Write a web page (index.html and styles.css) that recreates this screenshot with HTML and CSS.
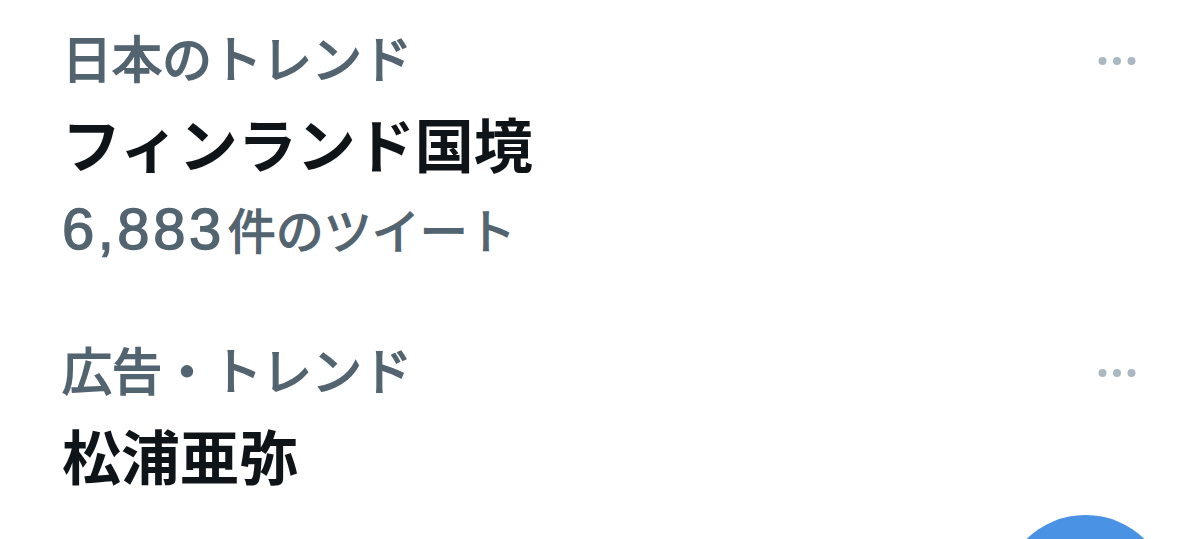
FILE: index.html
```html
<!DOCTYPE html>
<html lang="ja">
<head>
    <meta charset="UTF-8">
    <title>トレンド</title>
    <meta name="viewport" content="width=device-width, initial-scale=1.0">
    <link rel="stylesheet" href="styles.css">
</head>
<body>
    <div class="screen">
        <div class="trends">
            <div class="trend">
                <div class="trend-text">
                    <div class="label">日本のトレンド</div>
                    <div class="title">フィンランド国境</div>
                    <div class="count"><span class="num">6,883</span>件のツイート</div>
                </div>
                <svg class="more" width="38" height="10" viewBox="0 0 38 10">
                    <circle cx="4.5" cy="5" r="4"/>
                    <circle cx="19" cy="5" r="4"/>
                    <circle cx="33.5" cy="5" r="4"/>
                </svg>
            </div>

            <div class="trend">
                <div class="trend-text">
                    <div class="label">広告・トレンド</div>
                    <div class="title">松浦亜弥</div>
                </div>
                <svg class="more" width="38" height="10" viewBox="0 0 38 10">
                    <circle cx="4.5" cy="5" r="4"/>
                    <circle cx="19" cy="5" r="4"/>
                    <circle cx="33.5" cy="5" r="4"/>
                </svg>
            </div>
        </div>

        <div class="fab"></div>
    </div>
</body>
</html>
```

FILE: styles.css
```css
body {
    margin: 0;
    background: #fff;
    font-family: 'Liberation Sans', 'Noto Sans CJK JP', sans-serif;
}
.screen {
    position: relative;
    height: 539px;
    overflow: hidden;
}
.trends {
    display: flex;
    flex-direction: column;
    gap: 62px;
    padding: 19px 64px 0 62px;
}
.trend {
    display: flex;
    justify-content: space-between;
    align-items: flex-start;
}
.trend-text {
    display: flex;
    flex-direction: column;
}
.label {
    color: #536471;
    font-size: 50px;
    line-height: 84px;
    -webkit-text-stroke: 1.8px #536471;
}
.title {
    color: #0f1419;
    font-size: 59px;
    font-weight: 700;
    line-height: 90px;
}
.count {
    color: #536471;
    font-size: 48px;
    line-height: 72px;
    -webkit-text-stroke: 1.4px #536471;
}
.num {
    font-size: 58px;
    letter-spacing: 3.5px;
    margin-right: 3px;
}
.more {
    fill: #aab8c2;
    margin-top: 37px;
}
.fab {
    position: absolute;
    left: 1001px;
    top: 515px;
    width: 169px;
    height: 169px;
    border-radius: 50%;
    background: #4a92e4;
}
```
